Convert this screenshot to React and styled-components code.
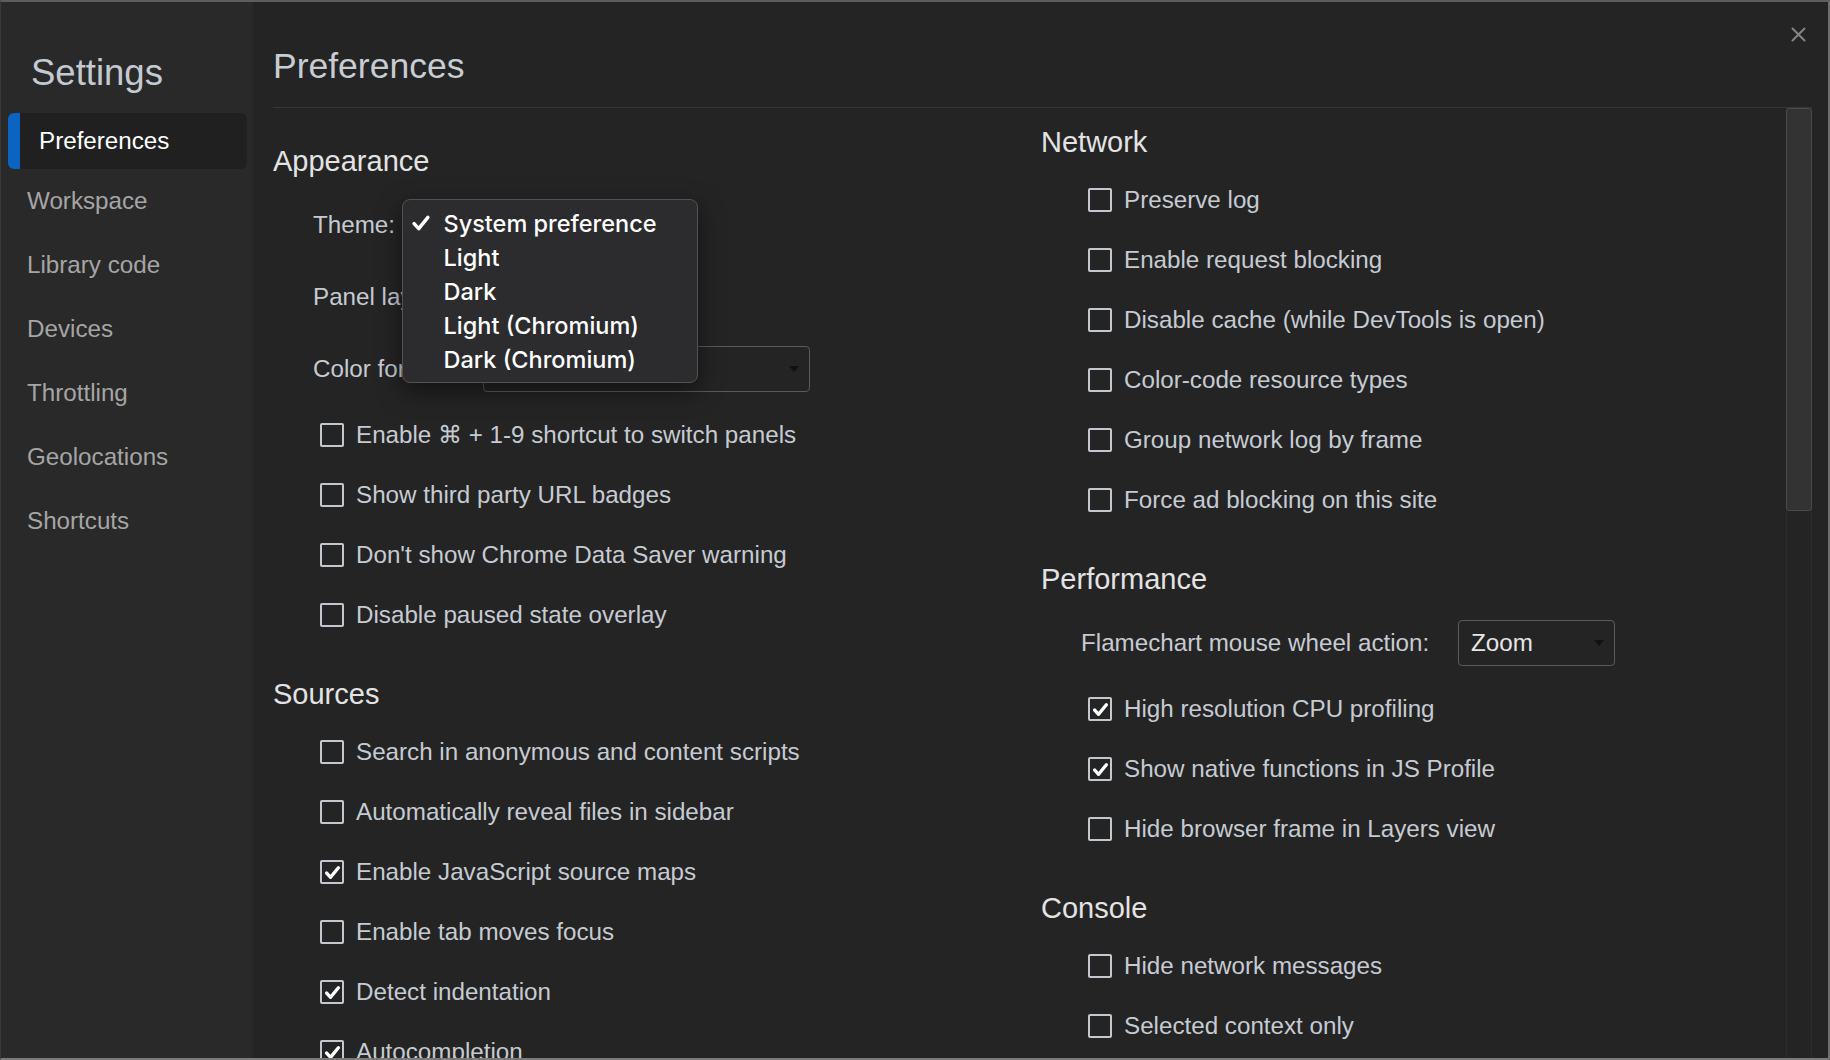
import styled, { createGlobalStyle } from "styled-components";

const GlobalStyle = createGlobalStyle`
  html, body {
    margin: 0;
    padding: 0;
    background: #242424;
  }
  body {
    font-family: "Liberation Sans", Arial, sans-serif;
  }
`;

const Window = styled.div`
  width: 1830px;
  height: 1060px;
  box-sizing: border-box;
  display: flex;
  overflow: hidden;
  background: #242424;
  border: 2px solid #5d5d5d;
  border-left: 1px solid #3a3a3a;
  border-right-color: #6e6e6e;
  border-bottom-color: #7a7a7a;
`;

// left nav
const Sidebar = styled.nav`
  width: 252px;
  flex-shrink: 0;
  box-sizing: border-box;
  padding-top: 49px;
  background: #292929;
`;

const SideTitle = styled.h1`
  margin: 0 0 18px 30px;
  font-size: 36.5px;
  line-height: 44px;
  font-weight: 400;
  color: #c5cad1;
`;

const NavItem = styled.div`
  display: flex;
  align-items: center;
  box-sizing: border-box;
  font-size: 24.2px;
  height: ${(p) => (p.$active ? 56 : 64)}px;
  color: ${(p) => (p.$active ? "#ffffff" : "#a5a5a5")};
  ${(p) =>
    p.$active
      ? `
    margin-left: 7px;
    width: 239px;
    padding-left: 19px;
    background: #202020;
    border-left: 12px solid #0b63c2;
    border-radius: 6px;
  `
      : `
    padding-left: 26px;
  `}
`;

const Main = styled.main`
  flex: 1;
  min-width: 0;
  display: flex;
  flex-direction: column;
  padding: 0 16px 0 20px;
`;

const Header = styled.header`
  height: 106px;
  flex-shrink: 0;
  box-sizing: border-box;
  display: flex;
  justify-content: space-between;
  align-items: flex-start;
  border-bottom: 1px solid #363636;
`;

const PageTitle = styled.h2`
  margin: 42px 0 0;
  font-size: 35.5px;
  line-height: 44px;
  font-weight: 400;
  color: #c8ccd3;
`;

const CloseButton = styled.button`
  margin: 23px 5px 0 0;
  width: 18px;
  height: 18px;
  padding: 0;
  border: 0;
  background: none;
  display: flex;
  align-items: center;
  justify-content: center;
`;

const Body = styled.div`
  flex: 1;
  min-height: 0;
  display: flex;
  overflow: hidden;
`;

const Columns = styled.div`
  flex: 1;
  display: grid;
  grid-template-columns: 768px 1fr;
  align-items: start;
`;

const Column = styled.div`
  padding-top: ${(p) => p.$top}px;
`;

const Section = styled.section`
  margin-bottom: 31px;
`;

const SectionTitle = styled.h3`
  margin: 0 0 10px;
  font-size: 29px;
  line-height: 36px;
  font-weight: 400;
  color: #e3e3e3;
`;

const CheckRow = styled.div`
  display: flex;
  align-items: center;
  gap: 12px;
  height: 60px;
  padding-left: 47px;
  font-size: 24.2px;
  color: #c6cbd2;
  white-space: nowrap;
`;

const Box = styled.span`
  width: 24px;
  height: 24px;
  flex-shrink: 0;
  box-sizing: border-box;
  border: 2px solid #c3c8cf;
  border-radius: 2px;
  display: flex;
  align-items: center;
  justify-content: center;
`;

const SelectRow = styled.div`
  position: relative;
  display: flex;
  align-items: center;
  height: 72px;
  padding-left: 40px;
`;

const FieldLabel = styled.span`
  width: ${(p) => p.$w}px;
  flex-shrink: 0;
  font-size: 24.2px;
  color: #c6cbd2;
  white-space: nowrap;
`;

const Select = styled.div`
  width: ${(p) => p.$w}px;
  height: 46px;
  box-sizing: border-box;
  display: flex;
  align-items: center;
  justify-content: space-between;
  padding: 0 10px 0 12px;
  border: 1px solid #5a5a5a;
  border-radius: 4px;
  font-size: 24.2px;
  color: #e6e6e6;
`;

const Arrow = styled.span`
  width: 0;
  height: 0;
  margin-left: auto;
  border-left: 5.5px solid transparent;
  border-right: 5.5px solid transparent;
  border-top: 6px solid #111111;
`;

// native popup menu, open over the theme select
const Menu = styled.div`
  position: absolute;
  left: 129px;
  top: 10px;
  z-index: 10;
  width: 296px;
  box-sizing: border-box;
  padding: 6px 0 6px 8px;
  background: #2c2c2e;
  border: 1px solid #525252;
  border-radius: 8px;
  box-shadow: 0 8px 24px rgba(0, 0, 0, 0.5);
  font-family: Inter, "Liberation Sans", sans-serif;
`;

const MenuItem = styled.div`
  display: flex;
  align-items: center;
  height: 34px;
  font-size: 23.5px;
  font-weight: 500;
  color: #ffffff;
`;

const CheckSlot = styled.span`
  width: 32.5px;
  display: flex;
  align-items: center;
`;

const Track = styled.div`
  width: 26px;
  flex-shrink: 0;
  box-sizing: border-box;
  display: flex;
  flex-direction: column;
  border-left: 1px solid #2d2d2d;
  border-right: 1px solid #2d2d2d;
`;

const Thumb = styled.div`
  height: 403px;
  margin: 0 -1px;
  box-sizing: border-box;
  background: #333333;
  border: 1px solid #4a4a4a;
  border-radius: 3px;
`;

const Tick = ({ size = 16, color = "#ffffff", w = 3 }) => (
  <svg width={size} height={size} viewBox="0 0 16 16">
    <path
      d="M2.5 8.5 L6.2 12.5 L13.5 3.5"
      fill="none"
      stroke={color}
      strokeWidth={w}
      strokeLinecap="round"
      strokeLinejoin="round"
    />
  </svg>
);

const Checkbox = ({ label, checked }) => (
  <CheckRow>
    <Box>{checked && <Tick size={17} w={3.2} />}</Box>
    {label}
  </CheckRow>
);

const navItems = [
  "Preferences",
  "Workspace",
  "Library code",
  "Devices",
  "Throttling",
  "Geolocations",
  "Shortcuts",
];

const themes = [
  "System preference",
  "Light",
  "Dark",
  "Light (Chromium)",
  "Dark (Chromium)",
];

const appearanceChecks = [
  { label: "Enable ⌘ + 1-9 shortcut to switch panels" },
  { label: "Show third party URL badges" },
  { label: "Don't show Chrome Data Saver warning" },
  { label: "Disable paused state overlay" },
];

const sourcesChecks = [
  { label: "Search in anonymous and content scripts" },
  { label: "Automatically reveal files in sidebar" },
  { label: "Enable JavaScript source maps", checked: true },
  { label: "Enable tab moves focus" },
  { label: "Detect indentation", checked: true },
  { label: "Autocompletion", checked: true },
];

const networkChecks = [
  { label: "Preserve log" },
  { label: "Enable request blocking" },
  { label: "Disable cache (while DevTools is open)" },
  { label: "Color-code resource types" },
  { label: "Group network log by frame" },
  { label: "Force ad blocking on this site" },
];

const performanceChecks = [
  { label: "High resolution CPU profiling", checked: true },
  { label: "Show native functions in JS Profile", checked: true },
  { label: "Hide browser frame in Layers view" },
];

const consoleChecks = [
  { label: "Hide network messages" },
  { label: "Selected context only" },
];

const App = () => {
  return (
    <>
      <GlobalStyle />
      <Window>
        <Sidebar>
          <SideTitle>Settings</SideTitle>
          {navItems.map((item, i) => (
            <NavItem key={item} $active={i === 0}>
              {item}
            </NavItem>
          ))}
        </Sidebar>

        <Main>
          <Header>
            <PageTitle>Preferences</PageTitle>
            <CloseButton aria-label="Close">
              <svg width="15" height="15" viewBox="0 0 15 15">
                <path
                  d="M1.5 1.5 L13.5 13.5 M13.5 1.5 L1.5 13.5"
                  stroke="#858585"
                  strokeWidth="2"
                  strokeLinecap="round"
                />
              </svg>
            </CloseButton>
          </Header>

          <Body>
            <Columns>
              <Column $top={35}>
                <Section>
                  <SectionTitle>Appearance</SectionTitle>
                  <SelectRow>
                    <FieldLabel $w={170}>Theme:</FieldLabel>
                    <Select $w={200}>
                      <Arrow />
                    </Select>
                    <Menu>
                      {themes.map((t, i) => (
                        <MenuItem key={t}>
                          <CheckSlot>
                            {i === 0 && <Tick size={20} w={2.8} />}
                          </CheckSlot>
                          {t}
                        </MenuItem>
                      ))}
                    </Menu>
                  </SelectRow>
                  <SelectRow>
                    <FieldLabel $w={170}>Panel layout:</FieldLabel>
                    <Select $w={200}>
                      <Arrow />
                    </Select>
                  </SelectRow>
                  <SelectRow>
                    <FieldLabel $w={170}>Color format:</FieldLabel>
                    <Select $w={327}>
                      <Arrow />
                    </Select>
                  </SelectRow>
                  {appearanceChecks.map((c) => (
                    <Checkbox key={c.label} {...c} />
                  ))}
                </Section>
                <Section>
                  <SectionTitle>Sources</SectionTitle>
                  {sourcesChecks.map((c) => (
                    <Checkbox key={c.label} {...c} />
                  ))}
                </Section>
              </Column>

              <Column $top={16}>
                <Section>
                  <SectionTitle>Network</SectionTitle>
                  {networkChecks.map((c) => (
                    <Checkbox key={c.label} {...c} />
                  ))}
                </Section>
                <Section>
                  <SectionTitle>Performance</SectionTitle>
                  <SelectRow>
                    <FieldLabel $w={377}>Flamechart mouse wheel action:</FieldLabel>
                    <Select $w={157}>
                      Zoom
                      <Arrow />
                    </Select>
                  </SelectRow>
                  {performanceChecks.map((c) => (
                    <Checkbox key={c.label} {...c} />
                  ))}
                </Section>
                <Section>
                  <SectionTitle>Console</SectionTitle>
                  {consoleChecks.map((c) => (
                    <Checkbox key={c.label} {...c} />
                  ))}
                </Section>
              </Column>
            </Columns>

            <Track>
              <Thumb />
            </Track>
          </Body>
        </Main>
      </Window>
    </>
  );
};

export default App;
